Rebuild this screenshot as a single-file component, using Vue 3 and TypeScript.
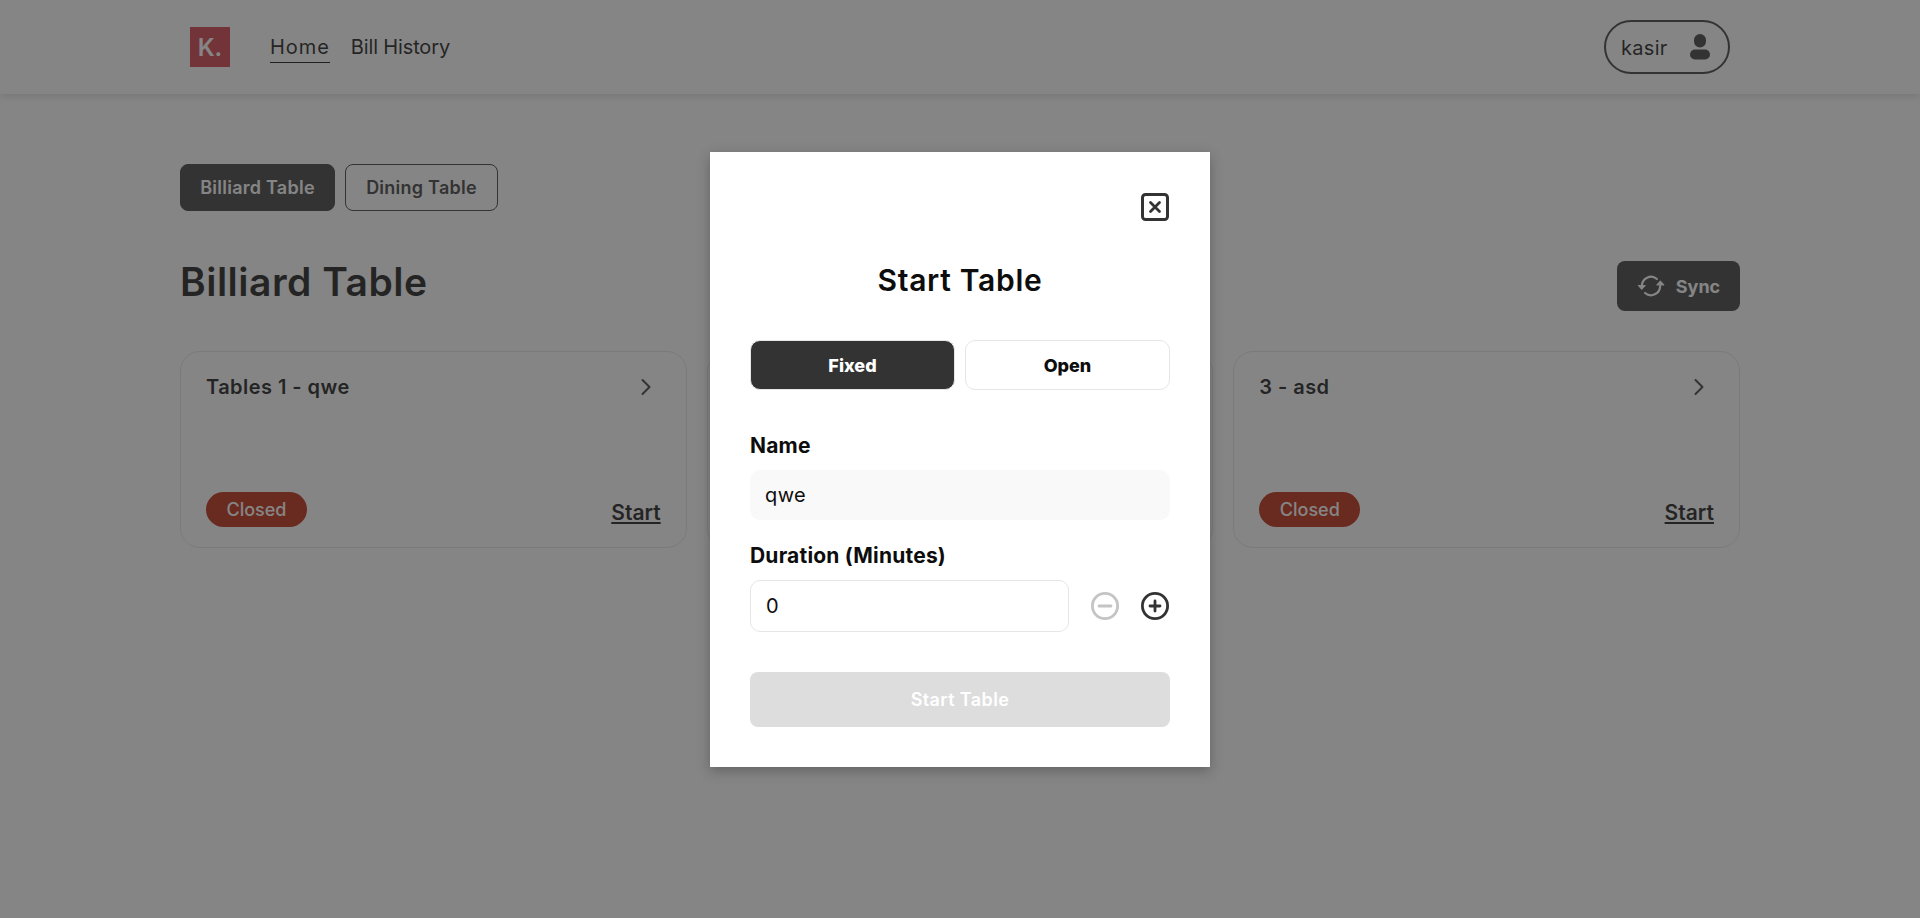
<script setup lang="ts">
interface TableCard { id: number; name: string; hidden?: boolean }
const tables: TableCard[] = [
  { id: 1, name: 'Tables 1 - qwe' },
  { id: 2, name: '', hidden: true },
  { id: 3, name: '3 - asd' },
]
</script>

<template>
  <div class="page">
    <header class="topbar">
      <div class="brand">K<span>.</span></div>
      <nav class="nav">
        <a class="nav-link active">Home</a>
        <a class="nav-link">Bill History</a>
      </nav>
      <div class="user">
        <span>kasir</span>
        <svg width="20" height="26" viewBox="0 0 20 26" fill="#333">
          <rect x="4" y="0" width="12" height="13.5" rx="6" />
          <rect x="0" y="15.5" width="20" height="10" rx="5" />
        </svg>
      </div>
    </header>

    <main class="content">
      <div class="tabs">
        <button class="tab selected">Billiard Table</button>
        <button class="tab">Dining Table</button>
      </div>
      <div class="title-row">
        <h1>Billiard Table</h1>
        <button class="sync">
          <svg width="28" height="26" viewBox="0 0 26 24" fill="none" stroke="#fff" stroke-width="2" stroke-linecap="round" stroke-linejoin="round">
            <path d="M4.500 12a8.500 8.500 0 0 1 14-6.500" />
            <path d="M21.500 12a8.500 8.500 0 0 1-14 6.500" />
            <path d="M18.500 11l3.200-3.500 3.200 3.500h-6.400z" fill="#fff" stroke-width="1" />
            <path d="M1.200 11.500l3.200 3.500 3.200-3.500h-6.400z" fill="#fff" stroke-width="1" />
          </svg>
          <span>Sync</span>
        </button>
      </div>
      <section class="grid">
        <article v-for="t in tables" :key="t.id" class="card">
          <template v-if="!t.hidden">
            <div class="card-top">
              <span class="card-name">{{ t.name }}</span>
              <svg width="12" height="18" viewBox="0 0 12 18" fill="none" stroke="#333" stroke-width="2" stroke-linecap="round" stroke-linejoin="round"><path d="M2.500 2l7 7-7 7" /></svg>
            </div>
            <div class="card-bottom">
              <span class="badge">Closed</span>
              <a class="start">Start</a>
            </div>
          </template>
        </article>
      </section>
    </main>

    <div class="scrim"></div>

    <div class="modal">
      <div class="close-row">
        <svg width="28" height="28" viewBox="0 0 28 28" fill="none" stroke="#333" stroke-linecap="round">
          <rect x="1.500" y="1.500" width="25" height="25" rx="3" stroke-width="3" />
          <path d="M9.500 9.500l9 9M18.500 9.500l-9 9" stroke-width="2.800" />
        </svg>
      </div>
      <h2>Start Table</h2>
      <div class="toggle">
        <button class="toggle-btn on">Fixed</button>
        <button class="toggle-btn">Open</button>
      </div>
      <div class="label first">Name</div>
      <div class="field filled">qwe</div>
      <div class="label second">Duration (Minutes)</div>
      <div class="duration">
        <div class="field outlined">0</div>
        <svg width="28" height="28" viewBox="0 0 28 28" fill="none" stroke="#c4c4c4" stroke-width="2.800" stroke-linecap="round">
          <circle cx="14" cy="14" r="12.600" /><path d="M8 14h12" />
        </svg>
        <svg width="28" height="28" viewBox="0 0 28 28" fill="none" stroke="#333" stroke-width="2.800" stroke-linecap="round">
          <circle cx="14" cy="14" r="12.600" /><path d="M9 14h10M14 9v10" />
        </svg>
      </div>
      <button class="submit">Start Table</button>
    </div>
  </div>
</template>

<style>
html, body { margin: 0; background: #fff; }
</style>

<style scoped>
.page {
  height: 918px;
  overflow: hidden;
  position: relative;
  font-family: Inter, "Noto Sans", sans-serif;
  color: #0d0d0d;
  background: #fff;
}
button { font-family: inherit; cursor: pointer; }

.topbar {
  height: 94px;
  box-sizing: border-box;
  padding: 0 190px;
  display: flex;
  align-items: center;
  box-shadow: 0 2px 8px rgba(0, 0, 0, .16);
}
.brand {
  width: 40px;
  height: 40px;
  background: #d0353f;
  color: #fff;
  font-size: 24px;
  font-weight: 600;
  display: flex;
  align-items: center;
  justify-content: center;
  box-sizing: border-box;
  padding-top: 1px;
}
.nav { display: flex; gap: 21px; margin-left: 40px; padding-top: 1px; }
.nav-link {
  font-size: 20px;
  line-height: 30px;
  border-bottom: 1px solid transparent;
  letter-spacing: -.15px;
}
.nav-link.active { border-bottom-color: #000; letter-spacing: .95px; }
.user {
  margin-left: auto;
  width: 126px;
  height: 54px;
  box-sizing: border-box;
  border: 2px solid #333;
  border-radius: 27px;
  padding: 0 18px 0 15px;
  display: flex;
  align-items: center;
  justify-content: space-between;
  font-size: 20px;
  letter-spacing: .3px;
}
.user span { padding-top: 2px; }

.content { padding: 70px 180px 0; }
.tabs { display: flex; gap: 10px; }
.tab {
  width: 153px;
  height: 47px;
  box-sizing: border-box;
  border: 1px solid #333;
  border-radius: 8px;
  background: transparent;
  color: #333;
  font-size: 18px;
  font-weight: 600;
  letter-spacing: .25px;
  padding: 0;
}
.tab.selected { background: #333; color: #fff; width: 155px; }
.title-row {
  display: flex;
  align-items: center;
  justify-content: space-between;
  margin-top: 51px;
  height: 56px;
}
h1 { margin: -17px 0 0; font-size: 39px; font-weight: 600; color: #0d0d0d; letter-spacing: .5px; }
.sync {
  width: 123px;
  height: 50px;
  border: 0;
  border-radius: 8px;
  background: #333;
  color: #fff;
  font-size: 18px;
  font-weight: 700;
  display: flex;
  align-items: center;
  justify-content: center;
  gap: 11px;
  padding: 0;
  margin-top: -8px;
}
.grid {
  display: grid;
  grid-template-columns: repeat(3, 1fr);
  gap: 20px;
  margin-top: 33px;
}
.card {
  height: 197px;
  box-sizing: border-box;
  border: 1px solid #e4e4e4;
  border-radius: 20px;
  padding: 20px 25px;
  display: flex;
  flex-direction: column;
  justify-content: space-between;
}
.card-top { display: flex; justify-content: space-between; align-items: center; height: 30px; padding-right: 9px; }
.card-name { font-size: 20px; font-weight: 600; letter-spacing: .45px; }
.card-bottom { display: flex; justify-content: space-between; align-items: flex-end; }
.badge {
  height: 35px;
  width: 101px;
  border-radius: 18px;
  background: #ba1c00;
  color: #fff;
  font-size: 18px;
  font-weight: 500;
  display: flex;
  align-items: center;
  justify-content: center;
}
.start { font-size: 21px; font-weight: 600; text-decoration: underline; margin-bottom: 2px; }

.scrim { position: absolute; inset: 0; background: rgba(51, 51, 51, .6); }

.modal {
  position: absolute;
  left: 710px;
  top: 152px;
  width: 500px;
  height: 615px;
  box-sizing: border-box;
  background: #fff;
  padding: 41px 40px 40px;
  box-shadow: 0 4px 12px rgba(0, 0, 0, .25);
  display: flex;
  flex-direction: column;
}
.close-row { display: flex; justify-content: flex-end; height: 28px; padding-right: 1px; }
h2 { margin: 37px 0 0; text-align: center; font-size: 30px; line-height: 44px; font-weight: 600; letter-spacing: .7px; }
.toggle { display: grid; grid-template-columns: 1fr 1fr; gap: 10px; margin-top: 38px; }
.toggle-btn {
  height: 50px;
  box-sizing: border-box;
  border: 1px solid #e6e6e6;
  border-radius: 10px;
  background: #fff;
  color: #0d0d0d;
  font-size: 18px;
  font-weight: 800;
}
.toggle-btn.on { background: #333; color: #fff; }
.label { font-size: 21px; font-weight: 700; line-height: 30px; letter-spacing: .2px; }
.label.first { margin-top: 41px; }
.label.second { margin-top: 21px; }
.field {
  box-sizing: border-box;
  border-radius: 10px;
  font-size: 20px;
  letter-spacing: .4px;
  display: flex;
  align-items: center;
  padding: 0 15px;
}
.filled { height: 50px; background: #f9f9f9; margin-top: 9px; }
.outlined { flex: 1; height: 52px; background: #fff; border: 1px solid #e6e6e6; }
.duration { display: flex; align-items: center; gap: 22px; margin-top: 9px; padding-right: 1px; }
.submit {
  height: 55px;
  margin-top: 40px;
  border: 0;
  border-radius: 8px;
  background: #dddddd;
  color: #fff;
  font-size: 18px;
  font-weight: 600;
  letter-spacing: .4px;
}
</style>
